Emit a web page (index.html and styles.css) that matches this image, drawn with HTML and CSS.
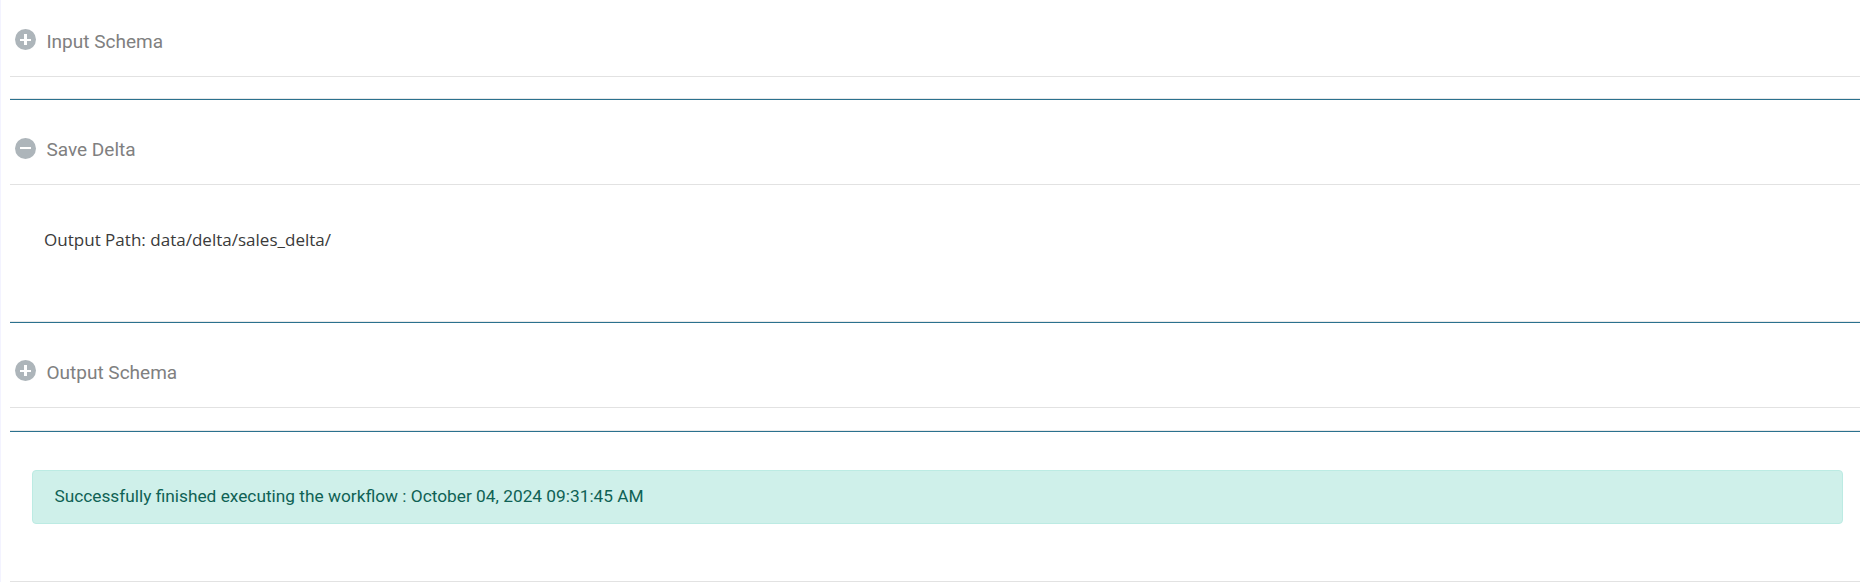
FILE: index.html
```html
<!DOCTYPE html>
<html lang="en">
<head>
<meta charset="utf-8">
<title>Workflow Execution</title>
<link rel="stylesheet" href="styles.css">
</head>
<body>
<main class="results">
  <section class="panel">
    <header class="panel-header">
      <svg class="icon" viewBox="0 0 21 21"><circle cx="10.5" cy="10.5" r="10.5" fill="#adb5ba"/><path d="M5 10h4V5h3v5h4v2h-4v4H9v-4H5z" fill="#fff"/></svg>
      <h2 class="title">Input Schema</h2>
    </header>
  </section>
  <hr class="divider divider-first">
  <section class="panel">
    <header class="panel-header">
      <svg class="icon" viewBox="0 0 21 21"><circle cx="10.5" cy="10.5" r="10.5" fill="#adb5ba"/><path d="M5 9h11v2H5z" fill="#fff"/></svg>
      <h2 class="title">Save Delta</h2>
    </header>
    <div class="panel-body">Output Path: data/delta/sales_delta/</div>
  </section>
  <hr class="divider divider-body">
  <section class="panel">
    <header class="panel-header">
      <svg class="icon" viewBox="0 0 21 21"><circle cx="10.5" cy="10.5" r="10.5" fill="#adb5ba"/><path d="M5 10h4V5h3v5h4v2h-4v4H9v-4H5z" fill="#fff"/></svg>
      <h2 class="title">Output Schema</h2>
    </header>
  </section>
  <hr class="divider divider-last">
  <div class="alert">Successfully finished executing the workflow : October 04, 2024 09:31:45 AM</div>
</main>
</body>
</html>
```
FILE: styles.css
```css
* { box-sizing: border-box; }
body { margin: 0; background: #fff; font-family: Roboto, sans-serif; }
.results {
  height: 582px;
  padding: 0 5px 0 9px;
  border-left: 1px solid #f3f3ff;
  overflow: hidden;
}
.panel-header {
  display: flex;
  height: 77px;
  padding: 29px 5px 0;
  border-bottom: 1px solid #e2e2e2;
}
.divider + .panel .panel-header { height: 85px; padding-top: 38px; }
.divider-body + .panel .panel-header { padding-top: 37px; }
.icon { width: 21px; height: 21px; flex: none; }
.title {
  margin: 1px 0 0 10.4px;
  font-size: 19.05px;
  font-weight: 400;
  line-height: 24px;
  color: #808080;
}
.divider-first + .panel .title { margin-top: 0; }
.divider {
  height: 2px;
  margin: 21px 0 0;
  border: 0;
  border-top: 1px solid #e8e8e8;
  background: #2b718e;
}
.divider-last { margin-top: 22px; }
.panel-body {
  height: 115px;
  padding: 43px 34px 0;
  font: 17.05px/24px "Open Sans", sans-serif;
  color: #3a3a3a;
}
.alert {
  height: 54px;
  margin: 38px 17px 57px 22px;
  padding: 13px 21.4px;
  border: 1px solid #bcebe3;
  border-radius: 4px;
  background: #cff0ea;
  color: #0f6255;
  font-size: 17.29px;
  line-height: 24px;
}
.results::after { content: ""; display: block; border-top: 1px solid #e2e2e2; }
```
